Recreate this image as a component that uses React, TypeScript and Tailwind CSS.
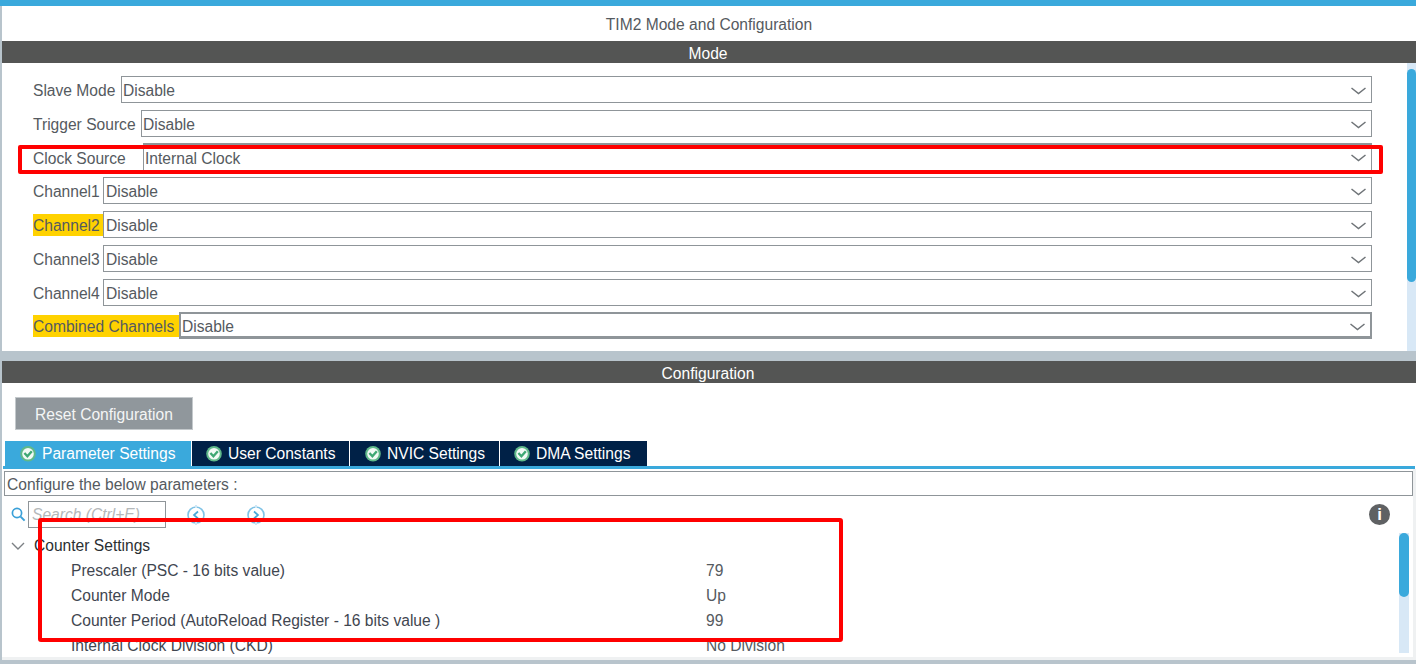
const font = { fontFamily: '"Liberation Sans", Arial, sans-serif' };

function Chevron() {
  return (
    <svg width="15" height="9" viewBox="0 0 15 9" className="shrink-0" fill="none">
      <path d="M0.5 1 L7.5 6.5 L14.5 1" stroke="#6f7478" strokeWidth="1.5" />
    </svg>
  );
}

const rows = [
  { label: "Slave Mode", value: "Disable", mt: "mt-[13px]", left: "w-[119px]", pad: "pl-[1px]" },
  { label: "Trigger Source", value: "Disable", mt: "mt-[7px]", left: "w-[139px]", pad: "pl-[1px]" },
  { label: "Clock Source", value: "Internal Clock", mt: "mt-[7px]", left: "w-[141px]", pad: "pl-[1px]", thick: true },
  { label: "Channel1", value: "Disable", mt: "mt-[6px]", left: "w-[101px]", pad: "pl-[2px]" },
  { label: "Channel2", value: "Disable", mt: "mt-[7px]", left: "w-[101px]", pad: "pl-[2px]", warn: true },
  { label: "Channel3", value: "Disable", mt: "mt-[7px]", left: "w-[101px]", pad: "pl-[2px]" },
  { label: "Channel4", value: "Disable", mt: "mt-[7px]", left: "w-[101px]", pad: "pl-[2px]" },
  { label: "Combined Channels", value: "Disable", mt: "mt-[6px]", left: "w-[177px]", pad: "pl-[1px]", warn: true, heavy: true },
];

function Row({ r }: { r: (typeof rows)[number] }) {
  return (
    <div className={`flex h-[27px] items-stretch ${r.mt}`}>
      <div className={`${r.left} flex shrink-0 items-center pl-[31px]`}>
        <span className={`flex h-[22px] items-center whitespace-nowrap pt-[3px] ${r.warn ? "w-full bg-[#ffd200]" : ""}`}>{r.label}</span>
      </div>
      <div
        className={`flex w-[1px] flex-1 items-center justify-between border border-[#8f9599] pr-[5px] ${r.pad} ${
          r.heavy ? "border-2 border-b-[3px] pt-[4px]" : r.thick ? "-mt-[1px] border-t-[3px] pt-[1px]" : "pt-[3px]"
        }`}
      >
        <span>{r.value}</span>
        <Chevron />
      </div>
    </div>
  );
}

function Check() {
  return (
    <svg width="16" height="16" viewBox="0 0 16 16" className="shrink-0">
      <circle cx="8" cy="7.8" r="7.8" fill="#5fb98a" />
      <circle cx="8" cy="7.8" r="5.8" fill="#f3faf6" />
      <path d="M4.4 7 L7.4 10.2 L11.8 5.2" stroke="#3fa874" strokeWidth="2.4" fill="none" />
    </svg>
  );
}

const tabs = [
  { t: "Parameter Settings", w: "w-[187px] pl-[15px]", active: true },
  { t: "User Constants", w: "w-[158px] pl-[14px]" },
  { t: "NVIC Settings", w: "w-[150px] pl-[15px]" },
  { t: "DMA Settings", w: "w-[148px] pl-[14px]" },
];

function NavIcon({ dir }: { dir: "l" | "r" }) {
  return (
    <svg width="18" height="20" viewBox="0 0 18 20" fill="none">
      <circle cx="9" cy="10" r="8" stroke="#7fc3e6" strokeWidth="1.6" />
      <path d="M9 0 V3 M9 17 V20" stroke="#cfe7f5" strokeWidth="2" />
      <path d={dir === "l" ? "M11 6.5 L7 10 L11 13.5" : "M7 6.5 L11 10 L7 13.5"} stroke="#4aa8d8" strokeWidth="1.7" />
    </svg>
  );
}

const params = [
  ["Prescaler (PSC - 16 bits value)", "79"],
  ["Counter Mode", "Up"],
  ["Counter Period (AutoReload Register - 16 bits value )", "99"],
  ["Internal Clock Division (CKD)", "No Division"],
];

export default function App() {
  return (
    <div className="relative flex h-[664px] w-[1416px] flex-col overflow-hidden bg-[#b8c4cc] pl-[2px] text-[15.6px] text-[#555a60]" style={font}>
      <div className="-ml-[2px] h-[6px] shrink-0 bg-[#3aa9dc]" />
      <div className="flex h-[35px] shrink-0 items-center justify-center bg-white pt-[3px]">TIM2 Mode and Configuration</div>
      <div className="flex h-[22px] shrink-0 items-center justify-center bg-[#545554] pr-[2px] pt-[3px] text-white">Mode</div>
      <div className="flex h-[288px] shrink-0 bg-white">
        <div className="flex-1">
          {rows.map((r) => (
            <Row key={r.label} r={r} />
          ))}
        </div>
        <div className="ml-[35px] h-full w-[9px] bg-[#d8e8f6]">
          <div className="mt-[6px] h-[213px] rounded-[5px] bg-[#3aa9dc]" />
        </div>
      </div>
      <div className="h-[10px] shrink-0" />
      <div className="flex h-[22px] shrink-0 items-center justify-center bg-[#545554] pr-[2px] pt-[3px] text-white">Configuration</div>
      <div className="flex h-[277px] shrink-0 flex-col bg-white">
        <div className="ml-[13px] mt-[14px] flex h-[33px] w-[178px] shrink-0 items-center justify-center border border-[#c4c9cc] bg-[#90979c] pt-[3px] text-[#f4f5f5]">
          Reset Configuration
        </div>
        <div className="ml-[3px] mt-[11px] flex h-[25px] shrink-0">
          {tabs.map((t) => (
            <div
              key={t.t}
              className={`${t.w} flex items-center gap-[6px] border-r border-white pt-[1px] text-white ${t.active ? "bg-[#3aa9dc]" : "bg-[#002147]"}`}
            >
              <Check />
              <span>{t.t}</span>
            </div>
          ))}
        </div>
        <div className="ml-[1px] mr-[1px] h-[3px] shrink-0 bg-[#3aa9dc]" />
        <div className="flex min-h-0 flex-1 flex-col border-b-[3px] border-r-[3px] border-[#eff1f2]">
          <div className="ml-[2px] mt-[2px] flex h-[25px] shrink-0 items-center border border-[#8f9599] pl-[2px] pt-[3px]">Configure the below parameters :</div>
          <div className="mt-[5px] flex h-[27px] shrink-0 items-center pl-[9px] pr-[23px]">
            <svg width="15" height="15" viewBox="0 0 15 15" fill="none" className="shrink-0">
              <circle cx="6" cy="6" r="4.6" stroke="#3aa0d8" strokeWidth="1.7" />
              <path d="M9.6 9.6 L13.6 13.6" stroke="#3aa0d8" strokeWidth="2" />
            </svg>
            <div className="ml-[2px] flex h-[27px] w-[138px] items-center border border-[#8f9599] pl-[3px] italic text-[#b4b8ba]">Search (Ctrl+E)</div>
            <div className="ml-[21px]"><NavIcon dir="l" /></div>
            <div className="ml-[42px]"><NavIcon dir="r" /></div>
            <div className="ml-auto flex h-[21px] w-[21px] items-center justify-center rounded-full bg-[#5f6163] text-[17px] font-bold text-white">i</div>
          </div>
          <div className="mt-[5px] flex min-h-0 flex-1">
            <div className="flex-1 overflow-hidden">
              <div className="flex h-[25px] items-center pt-[1px] text-[#2b2f33]">
                <svg width="14" height="10" viewBox="0 0 14 10" fill="none" className="ml-[9px] mr-[9px]">
                  <path d="M1 2 L7 8 L13 2" stroke="#7c8084" strokeWidth="1.4" />
                </svg>
                Counter Settings
              </div>
              {params.map(([a, b]) => (
                <div key={a} className="flex h-[25px] items-center pt-[1px]">
                  <span className="w-[704px] pl-[69px] text-[#3f4650]">{a}</span>
                  <span>{b}</span>
                </div>
              ))}
            </div>
            <div className="mr-[4px] h-[120px] w-[10px] self-start bg-[#d8e8f6]">
              <div className="h-[64px] rounded-[5px] bg-[#3aa9dc]" />
            </div>
          </div>
        </div>
      </div>
      <div className="absolute left-[18px] top-[145px] h-[29px] w-[1365px] rounded-[2px] border-[4px] border-[#ff0000]" />
      <div className="absolute left-[38px] top-[518px] h-[124px] w-[805px] rounded-[3px] border-[4px] border-[#ff0000]" />
    </div>
  );
}
